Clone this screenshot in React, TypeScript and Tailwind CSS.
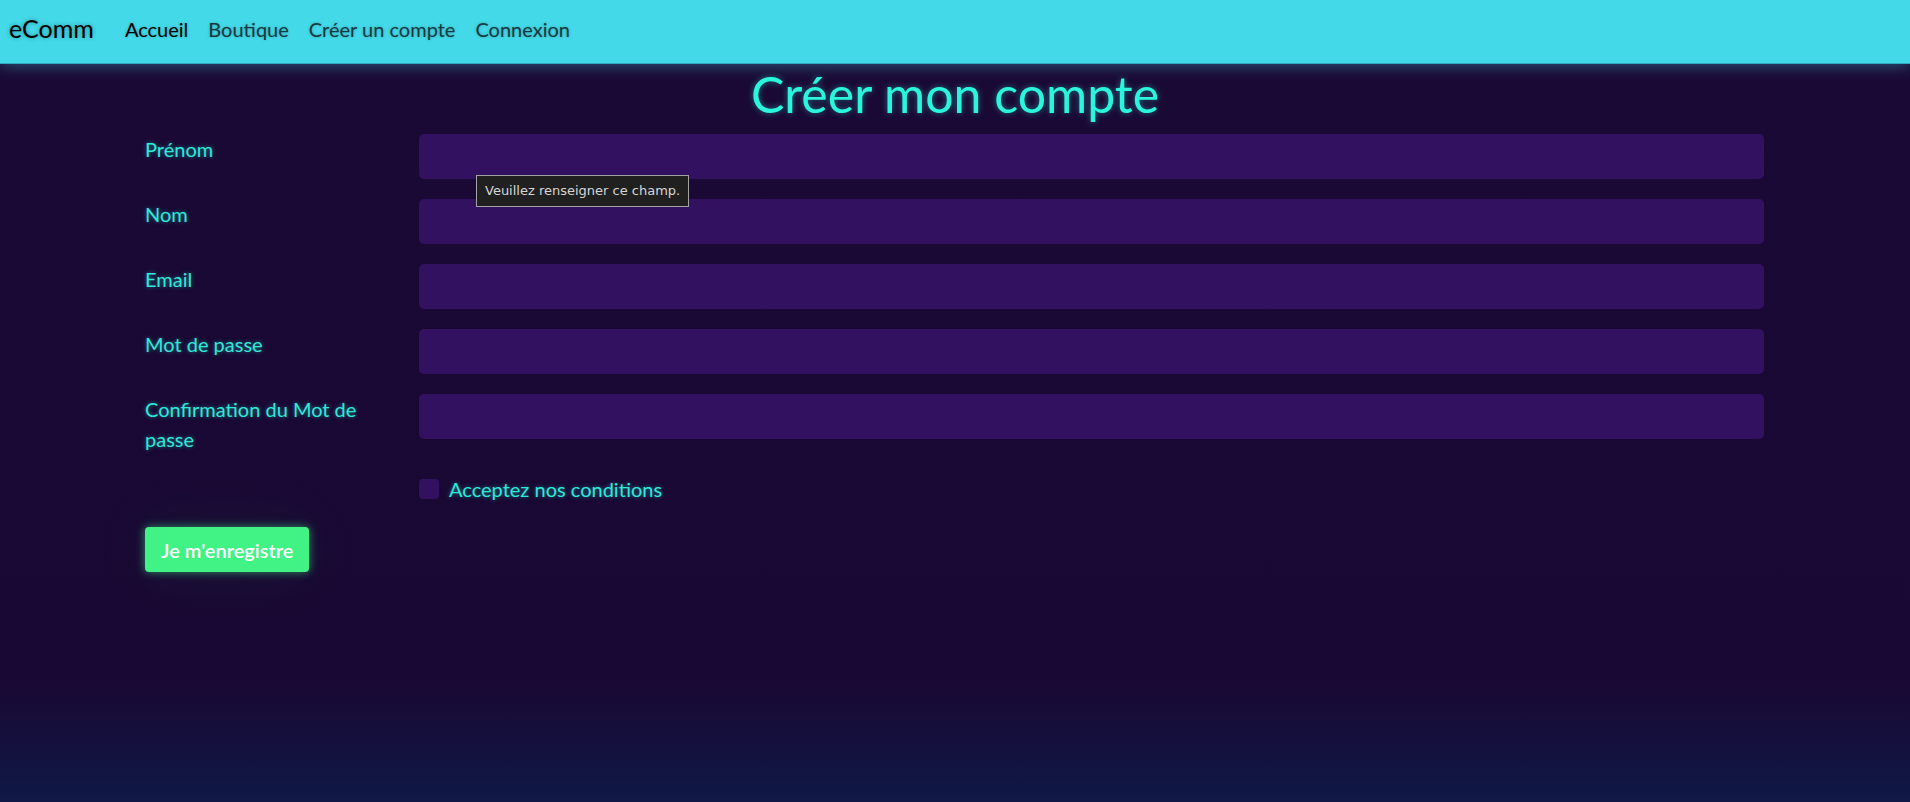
import { useState } from 'react'

const FIELDS = [
  { key: 'prenom', label: 'Prénom', type: 'text' },
  { key: 'nom', label: 'Nom', type: 'text' },
  { key: 'email', label: 'Email', type: 'email' },
  { key: 'password', label: 'Mot de passe', type: 'password' },
  { key: 'confirm', label: 'Confirmation du Mot de passe', type: 'password' },
]

const NAV_LINKS = [
  { label: 'Accueil', active: true },
  { label: 'Boutique' },
  { label: 'Créer un compte' },
  { label: 'Connexion' },
]

export default function App() {
  const [accepted, setAccepted] = useState(false)

  return (
    <div
      className="min-h-screen bg-[linear-gradient(to_bottom,#1c0d37_0%,#1a0935_12%,#190833_85%,#0f1846_100%)]"
      style={{ fontFamily: 'Lato, "Noto Sans", sans-serif' }}
    >
      {/* Navbar */}
      <nav className="relative z-10 flex h-16 items-center bg-[#43d9e8] pl-[9px] pb-[5px] border-b border-[#2fa9bb] shadow-[0_2px_14px_rgba(67,217,232,0.35)]">
        <a href="#" className="mr-[31px] text-[25px] text-black [text-shadow:0_0_4px_rgba(0,0,0,0.35)]">
          eComm
        </a>
        <div className="flex items-center gap-[20px]">
          {NAV_LINKS.map((link) => (
            <a
              key={link.label}
              href="#"
              className={`text-[20px] [text-shadow:0_0_3px_rgba(0,0,0,0.25)] ${
                link.active ? 'text-black' : 'text-[#17393f]'
              }`}
            >
              {link.label}
            </a>
          ))}
        </div>
      </nav>

      {/* Title */}
      <h1 className="text-center text-[50px] leading-[1.2] text-[#2bf5dd] [text-shadow:0_0_6px_rgba(43,245,221,0.45)]">
        Créer mon compte
      </h1>

      {/* Form */}
      <form className="ml-[133px] mt-[10px] w-[1643px]">
        {FIELDS.map((field, i) => (
          <div key={field.key} className="mb-5 flex items-start">
            <label className="w-[274px] shrink-0 px-3 text-[20px] leading-[30px] text-[#2ee9d9] [text-shadow:0_0_4px_rgba(46,233,217,0.5)]">
              {field.label}
            </label>
            <div className="relative flex-1 px-3">
              <input
                type={field.type}
                required
                className="h-[45px] w-full rounded-[5px] bg-[#321260] px-3 text-[20px] text-[#2ee9d9] outline-none"
              />
              {i === 0 && (
                <div
                  className="absolute left-[69px] top-[41px] z-20 whitespace-nowrap border border-[#a3a3a3] bg-[#202020] px-[8px] py-[5px] text-[13px] leading-[20px] text-[#d6d6d6]"
                  style={{ fontFamily: '"DejaVu Sans", "Noto Sans", sans-serif' }}
                >
                  Veuillez renseigner ce champ.
                </div>
              )}
            </div>
          </div>
        ))}

        {/* Conditions */}
        <div className="mb-[23px] flex">
          <div className="w-[274px] shrink-0" />
          <label className="flex items-center gap-[10px] px-3 text-[20px] leading-[30px] text-[#2ee9d9] [text-shadow:0_0_4px_rgba(46,233,217,0.5)]">
            <span
              onClick={() => setAccepted(!accepted)}
              className="h-5 w-5 rounded-[4px] bg-[#321260]"
            >
              {accepted && '✓'}
            </span>
            Acceptez nos conditions
          </label>
        </div>

        {/* Submit */}
        <div className="px-3">
          <button
            type="button"
            className="h-[45px] rounded-[4px] bg-[#41f285] px-4 text-[20px] font-semibold text-white shadow-[0_0_10px_rgba(65,242,133,0.55),0_0_60px_rgba(65,242,133,0.08)]"
          >
            Je m'enregistre
          </button>
        </div>
      </form>
    </div>
  )
}
